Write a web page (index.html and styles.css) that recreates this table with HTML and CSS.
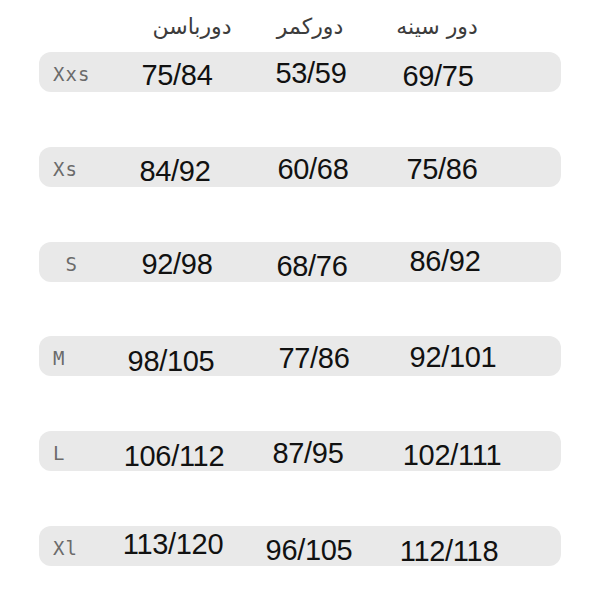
FILE: index.html
```html
<!DOCTYPE html>
<html lang="fa">
<head>
<meta charset="utf-8">
<title>Size chart</title>
<link rel="stylesheet" href="styles.css">
</head>
<body>
<div class="chart">
  <div class="head">
    <div class="hcell" dir="rtl">دورباسن</div>
    <div class="hcell" dir="rtl">دورکمر</div>
    <div class="hcell" dir="rtl">دور سینه</div>
  </div>
  <div class="rows">
    <div class="row">
      <div class="size">Xxs</div>
      <div class="num dx-p2 dy-p3">75/84</div>
      <div class="num dy-p1">53/59</div>
      <div class="num dx-m8 dy-p4">69/75</div>
    </div>
    <div class="row">
      <div class="size">Xs</div>
      <div class="num dy-p4">84/92</div>
      <div class="num dx-p2 dy-p2">60/68</div>
      <div class="num dx-m4 dy-p2">75/86</div>
    </div>
    <div class="row">
      <div class="size">&nbsp;S</div>
      <div class="num dx-p2 dy-p2">92/98</div>
      <div class="num dx-p1 dy-p4">68/76</div>
      <div class="num dx-m1 dy-m1">86/92</div>
    </div>
    <div class="row">
      <div class="size">M</div>
      <div class="num dx-m4 dy-p5">98/105</div>
      <div class="num dx-p3 dy-p2">77/86</div>
      <div class="num dx-p7 dy-p1">92/101</div>
    </div>
    <div class="row">
      <div class="size">L</div>
      <div class="num dx-m1 dy-p5">106/112</div>
      <div class="num dx-m3 dy-p2">87/95</div>
      <div class="num dx-p6 dy-p4">102/111</div>
    </div>
    <div class="row">
      <div class="size">Xl</div>
      <div class="num dx-m2 dy-m2">113/120</div>
      <div class="num dx-m2 dy-p4">96/105</div>
      <div class="num dx-p3 dy-p5">112/118</div>
    </div>
  </div>
</div>
</body>
</html>
```
FILE: styles.css
```css
html, body {
  margin: 0;
  padding: 0;
  background: #ffffff;
}
.chart {
  width: 600px;
  height: 602px;
  padding-left: 39px;
  box-sizing: border-box;
}
.head {
  height: 52px;
  display: grid;
  grid-template-columns: 118px 118px 136px;
  padding-left: 94px;
  align-items: center;
}
.hcell {
  text-align: center;
  font-family: "DejaVu Sans", "Noto Sans", sans-serif;
  font-size: 22px;
  color: #3c3c3c;
  padding-top: 1px;
}
.rows {
  display: flex;
  flex-direction: column;
  gap: 54.8px;
}
.row {
  width: 522px;
  height: 40px;
  background: #e9e9e9;
  border-radius: 12px;
  display: grid;
  grid-template-columns: 56px 132px 140px 130px;
  grid-template-rows: 40px;
  padding-left: 14px;
  box-sizing: border-box;
  align-items: center;
}
.size {
  font-family: "DejaVu Sans Mono", "Liberation Mono", monospace;
  font-size: 19px;
  letter-spacing: 1px;
  color: #6b6b6b;
  margin-top: 4px;
  white-space: pre;
}
.num {
  text-align: center;
  font-family: "Liberation Sans", Arial, sans-serif;
  font-size: 29px;
  color: #111111;
  letter-spacing: -0.3px;
  line-height: 34px;
  white-space: nowrap;
}

/* small hand-placed nudges, as in the source image */
.dx-m8 { margin-right: 16px; }
.dx-m4 { margin-right: 8px; }
.dx-m3 { margin-right: 6px; }
.dx-m2 { margin-right: 4px; }
.dx-m1 { margin-right: 2px; }
.dx-p1 { margin-left: 2px; }
.dx-p2 { margin-left: 4px; }
.dx-p3 { margin-left: 6px; }
.dx-p6 { margin-left: 12px; }
.dx-p7 { margin-left: 14px; }
.dy-m2 { margin-bottom: 4px; }
.dy-m1 { margin-bottom: 2px; }
.dy-p1 { margin-top: 2px; }
.dy-p2 { margin-top: 4px; }
.dy-p3 { margin-top: 6px; }
.dy-p4 { margin-top: 8px; }
.dy-p5 { margin-top: 10px; }
```
